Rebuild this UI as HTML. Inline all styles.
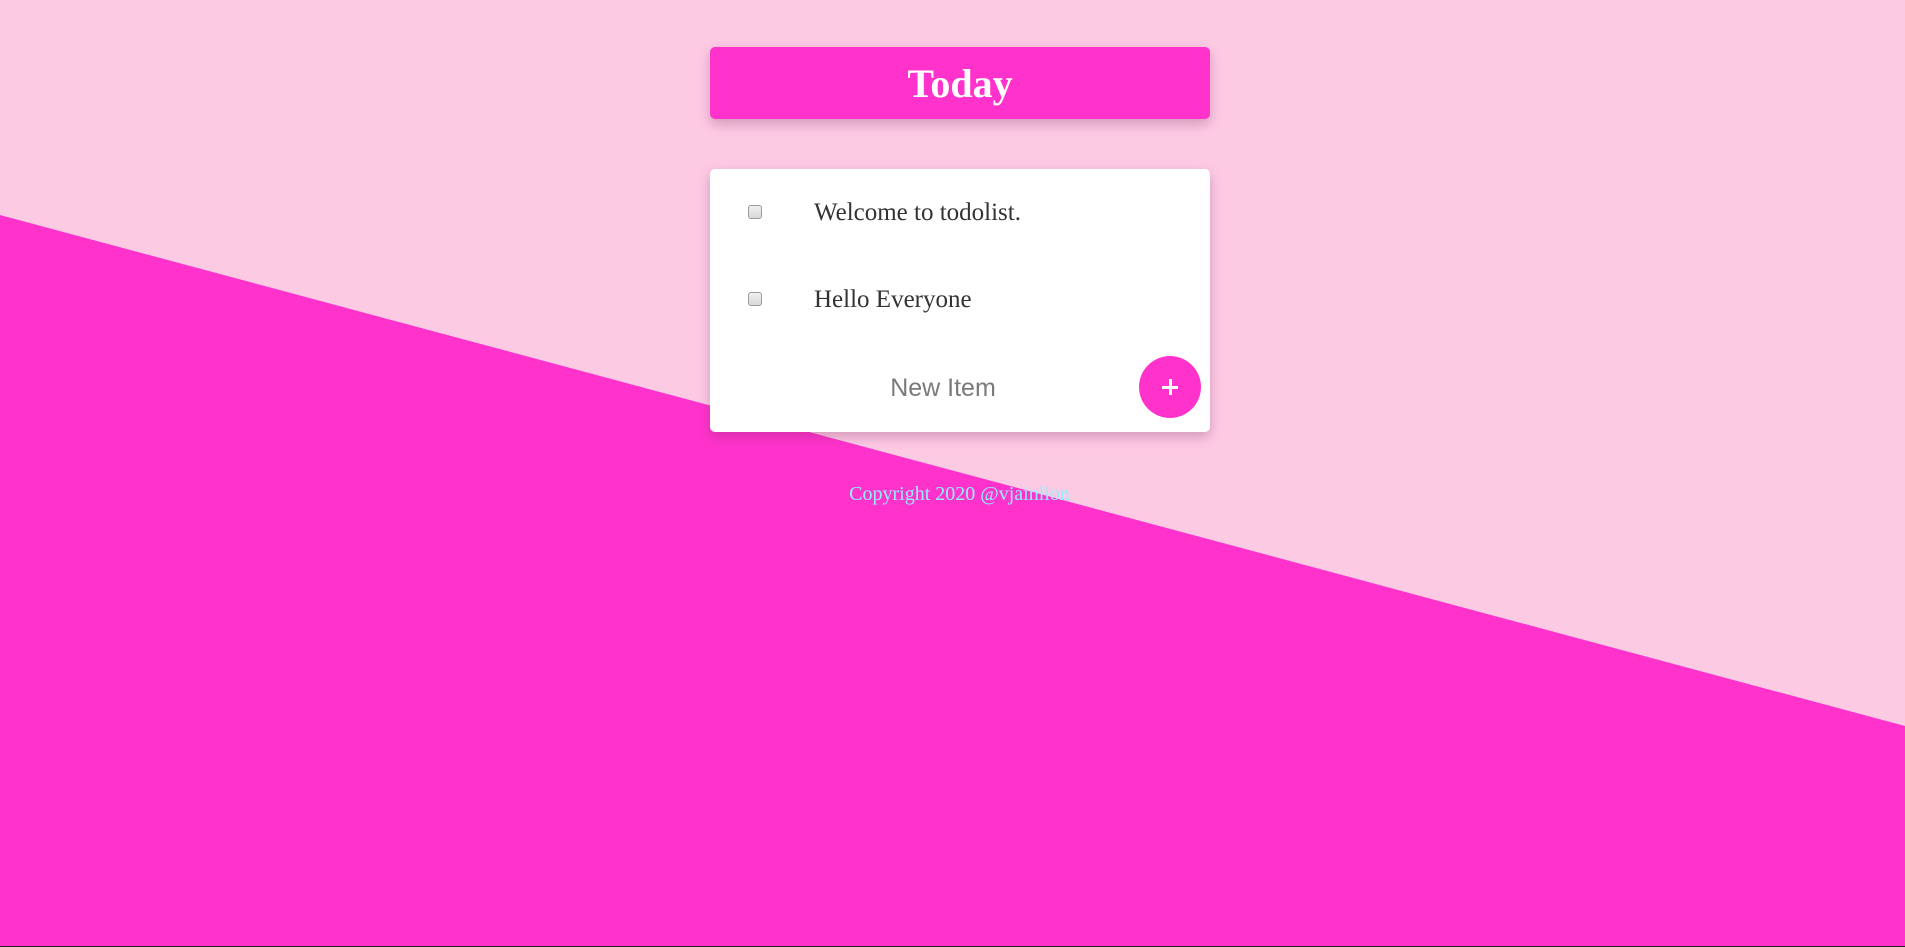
<!DOCTYPE html>
<html><head><meta charset="utf-8"><style>
html,body{margin:0;padding:0;}
body{width:1905px;height:947px;position:relative;overflow:hidden;background:#ff33cc;font-family:"Liberation Serif",serif;}
.bg{position:absolute;left:0;top:0;width:1905px;height:947px;}
.title{position:absolute;left:710px;top:47px;width:500px;height:72px;background:#ff33cc;border-radius:5px;box-shadow:0 5px 12px rgba(120,40,90,0.3);color:#fff;font-weight:bold;font-size:40px;text-align:center;line-height:74px;}
.card{position:absolute;left:710px;top:169px;width:500px;height:263px;background:#fff;border-radius:5px;box-shadow:0 5px 12px rgba(120,40,90,0.3);}
.row{position:absolute;left:0;width:500px;height:40px;}
.cb{position:absolute;left:38px;top:13px;width:12px;height:12px;border:1px solid #9a9a9a;border-radius:3px;background:linear-gradient(#f0f0f0,#d8d8d8);}
.txt{position:absolute;left:104px;top:1px;line-height:40px;font-size:25px;color:#333;}
.new{position:absolute;left:83px;top:199px;width:300px;text-align:center;font-family:"Liberation Sans",sans-serif;font-size:25px;color:#7a7a7a;line-height:40px;}
.plus{position:absolute;left:429px;top:187px;width:62px;height:62px;border-radius:50%;background:#ff33cc;}
.plus:before{content:"";position:absolute;left:23px;top:30px;width:16px;height:3px;background:#fff;}
.plus:after{content:"";position:absolute;left:30px;top:23px;width:3px;height:16px;background:#fff;}
.copy{position:absolute;width:1905px;top:483px;text-align:center;font-size:20px;color:#8ef0ff;line-height:22px;}
</style></head><body>
<svg class="bg" width="1905" height="947"><rect width="1905" height="947" fill="#ff33cc"/><polygon points="0,0 1905,0 1905,726 0,215" fill="#fdcae4"/><rect x="0" y="946" width="1905" height="1" fill="#2a1a24"/></svg>
<div class="title">Today</div>
<div class="card">
  <div class="row" style="top:23px"><div class="cb"></div><div class="txt">Welcome to todolist.</div></div>
  <div class="row" style="top:110px"><div class="cb"></div><div class="txt">Hello Everyone</div></div>
  <div class="new">New Item</div>
  <div class="plus"></div>
</div>
<div class="copy" style="left:7px">Copyright 2020 @vjainlion</div>
</body></html>
